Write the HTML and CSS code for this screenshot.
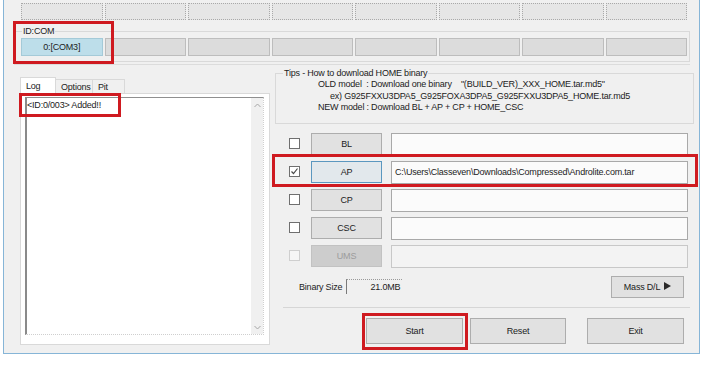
FILE: index.html
```html
<!DOCTYPE html>
<html>
<head>
    <title>Odin</title>
    <link rel="stylesheet" href="styles.css">
</head>
<body>
    <div class="window">
        <div class="slot-row">
            <div class="slot"></div>
            <div class="slot"></div>
            <div class="slot"></div>
            <div class="slot"></div>
            <div class="slot"></div>
            <div class="slot"></div>
            <div class="slot"></div>
            <div class="slot"></div>
        </div>

        <fieldset class="idcom">
            <legend>ID:COM</legend>
            <div class="port-row">
                <div class="port active">0:[COM3]</div>
                <div class="port"></div>
                <div class="port"></div>
                <div class="port"></div>
                <div class="port"></div>
                <div class="port"></div>
                <div class="port"></div>
                <div class="port"></div>
            </div>
        </fieldset>
        <div class="rule"></div>

        <div class="main">
            <div class="left">
                <div class="tabs">
                    <div class="tab current tab-log">Log</div>
                    <div class="tab tab-options">Options</div>
                    <div class="tab tab-pit">Pit</div>
                </div>
                <div class="tab-panel">
                    <div class="log">
                        <div class="log-text">&lt;ID:0/003&gt; Added!!</div>
                        <div class="scrollbar">
                            <svg width="7" height="5" viewBox="0 0 7 5"><polyline points="0.5,4 3.5,1 6.5,4" fill="none" stroke="#a6a6a6" stroke-width="1"/></svg>
                            <svg width="7" height="5" viewBox="0 0 7 5"><polyline points="0.5,1 3.5,4 6.5,1" fill="none" stroke="#a6a6a6" stroke-width="1"/></svg>
                        </div>
                    </div>
                </div>
            </div>

            <div class="right">
                <fieldset class="tips">
                    <legend>Tips - How to download HOME binary</legend>
                    <div class="tip-line">OLD model  : Download one binary    "(BUILD_VER)_XXX_HOME.tar.md5"</div>
                    <div class="tip-line ex">ex) G925FXXU3DPA5_G925FOXA3DPA5_G925FXXU3DPA5_HOME.tar.md5</div>
                    <div class="tip-line">NEW model : Download BL + AP + CP + HOME_CSC</div>
                </fieldset>

                <div class="files">
                    <div class="file-row">
                        <span class="check"></span>
                        <button class="btn file-btn">BL</button>
                        <div class="path"></div>
                    </div>
                    <div class="file-row">
                        <span class="check on">
                            <svg width="9" height="9" viewBox="0 0 9 9"><polyline points="1.5,4.5 3.5,6.5 7.5,1.5" fill="none" stroke="#4a4a4a" stroke-width="1.2"/></svg>
                        </span>
                        <button class="btn file-btn focus">AP</button>
                        <div class="path">C:\Users\Classeven\Downloads\Compressed\Androlite.com.tar</div>
                    </div>
                    <div class="file-row">
                        <span class="check"></span>
                        <button class="btn file-btn">CP</button>
                        <div class="path"></div>
                    </div>
                    <div class="file-row">
                        <span class="check"></span>
                        <button class="btn file-btn">CSC</button>
                        <div class="path"></div>
                    </div>
                    <div class="file-row">
                        <span class="check off"></span>
                        <button class="btn file-btn" disabled>UMS</button>
                        <div class="path off"></div>
                    </div>
                </div>

                <div class="size-row">
                    <span>Binary Size</span>
                    <div class="size-box">21.0MB</div>
                    <button class="btn mass">Mass D/L <svg width="7" height="8" viewBox="0 0 7 8"><polygon points="0,0 7,4 0,8" fill="#2a2a2a"/></svg></button>
                </div>
                <div class="sep"></div>

                <div class="actions">
                    <button class="btn action start">Start</button>
                    <button class="btn action reset">Reset</button>
                    <button class="btn action">Exit</button>
                </div>
            </div>
        </div>

        <!-- red highlight marks drawn over the screenshot -->
        <div class="mark mark-id"></div>
        <div class="mark mark-log"></div>
        <div class="mark mark-ap"></div>
        <div class="mark mark-start"></div>
    </div>
</body>
</html>
```

FILE: styles.css
```css
body {
    margin: 0;
    background: #fff;
    font-family: "Liberation Sans", Arial, sans-serif;
    font-size: 9px;
    letter-spacing: -0.2px;
    color: #1c1c1c;
}

.window {
    position: relative;
    margin-left: 3px;
    width: 697px;
    height: 354px;
    box-sizing: border-box;
    padding-top: 3px;
    border: 1px solid #86b5d7;
    border-top: 0;
    background: #f0f0f0;
}

.slot-row {
    display: grid;
    grid-template-columns: repeat(8, 1fr);
    gap: 2px;
    width: 666px;
    margin-left: 17px;
}

.slot {
    height: 17px;
    box-sizing: border-box;
    border: 1px dotted #a9a9a9;
    background: #e6e6e6;
}

fieldset {
    margin: 0;
    box-sizing: border-box;
    border: 1px solid #d9d9d9;
}

legend {
    padding: 0 1px;
    line-height: 12px;
}

.idcom {
    width: 676px;
    margin: 5px 0 0 10px;
    padding: 0 0 5px 7px;
}

.port-row {
    display: grid;
    grid-template-columns: repeat(8, 1fr);
    gap: 2px;
    width: 666px;
    margin: 1px 0 0 -1px;
}

.port {
    height: 18px;
    box-sizing: border-box;
    border: 1px solid #bdbdbd;
    background: #dcdcdc;
    text-align: center;
    line-height: 16px;
}

.port.active {
    background: #bddeea;
    border-color: #a4cad8;
}

.rule {
    width: 676px;
    height: 1px;
    margin: 2px 0 0 10px;
    background: #dcdcdc;
}

.main {
    display: flex;
    margin-top: 1px;
}

.left {
    width: 250px;
    margin: 11px 0 0 16px;
}

.tabs {
    display: flex;
    align-items: flex-end;
    height: 16px;
}

.tab {
    height: 14px;
    box-sizing: border-box;
    padding-left: 5px;
    border: 1px solid #d9d9d9;
    border-bottom: 0;
    line-height: 14px;
}

.tab + .tab {
    margin-left: -1px;
}

.tab.current {
    height: 16px;
    background: #fff;
    line-height: 16px;
}

.tab-log { width: 36px; }
.tab-options { width: 38px; }
.tab-pit { width: 33px; }

.tab-panel {
    height: 252px;
    box-sizing: border-box;
    padding: 3px 0 0 4px;
    border: 1px solid #d9d9d9;
    background: #fff;
}

.log {
    display: flex;
    width: 239px;
    height: 238px;
    box-sizing: border-box;
    border-left: 2px solid #8a8a8a;
    border-top: 1px solid #8f8f8f;
    border-right: 1px dotted #cfcfcf;
    border-bottom: 1px dotted #cfcfcf;
}

.log-text {
    flex: 1;
    padding-top: 1px;
    line-height: 12px;
}

.scrollbar {
    display: flex;
    flex-direction: column;
    justify-content: space-between;
    align-items: center;
    width: 12px;
    padding: 5px 0 4px;
    background: #f0f0f0;
}

.right {
    width: 419px;
    margin: 1px 0 0 5px;
}

.tips {
    width: 419px;
    padding: 0 0 9px 7px;
}

.tip-line {
    margin-left: 35px;
    line-height: 11.5px;
    white-space: pre;
}

.tip-line.ex {
    margin-left: 47px;
}

.files {
    display: flex;
    flex-direction: column;
    gap: 6px;
    margin-top: 9px;
}

.file-row {
    display: flex;
    align-items: flex-start;
    height: 22px;
    padding-left: 14px;
}

.check {
    display: flex;
    align-items: center;
    justify-content: center;
    width: 11px;
    height: 11px;
    box-sizing: border-box;
    margin: 5px 11px 0 0;
    border: 1px solid #6f6f6f;
    background: #fff;
}

.check.off {
    border-color: #cfcfcf;
    background: #f6f6f6;
}

.btn {
    box-sizing: border-box;
    padding: 0;
    border: 1px solid #adadad;
    background: #e1e1e1;
    font: inherit;
    letter-spacing: inherit;
    color: #1c1c1c;
}

.btn:disabled {
    border-color: #c2c2c2;
    background: #cdcdcd;
    color: #9c9c9c;
}

.file-btn {
    width: 71px;
    height: 22px;
}

.file-btn.focus {
    border-color: #5b97bf;
    background: #e2e8ec;
}

.path {
    width: 297px;
    height: 23px;
    box-sizing: border-box;
    margin-left: 9px;
    padding-left: 3px;
    border: 1px solid #a9a9a9;
    background: #fbfbfb;
    line-height: 21px;
    white-space: nowrap;
}

.path.off {
    border-color: #c8c8c8;
    background: #f3f3f3;
}

.size-row {
    display: flex;
    align-items: center;
    height: 22px;
    margin-top: 9px;
    padding-left: 24px;
}

.size-box {
    width: 56px;
    height: 15px;
    box-sizing: border-box;
    margin-left: 4px;
    padding-right: 2px;
    border-left: 1px solid #7a7a7a;
    border-top: 1px dotted #9a9a9a;
    text-align: right;
    line-height: 14px;
}

.mass {
    width: 73px;
    height: 22px;
    margin: 0 10px 0 auto;
}

.mass svg {
    margin-left: 2px;
}

.sep {
    height: 1px;
    margin: 9px 4px 0 8px;
    background: #d6d6d6;
}

.actions {
    display: flex;
    justify-content: flex-end;
    margin-top: 10px;
    padding-right: 10px;
}

.action {
    width: 97px;
    height: 26px;
}

.start {
    margin-right: 7px;
}

.reset {
    width: 96px;
    margin-right: 21px;
}

.mark {
    position: absolute;
    box-sizing: border-box;
    border: 3px solid #cf1a20;
}

.mark-id { left: 9px; top: 21px; width: 101px; height: 43px; }
.mark-log { left: 15px; top: 93px; width: 102px; height: 24px; }
.mark-ap { left: 268px; top: 154px; width: 426px; height: 33px; }
.mark-start { left: 358px; top: 313px; width: 106px; height: 37px; }
```
